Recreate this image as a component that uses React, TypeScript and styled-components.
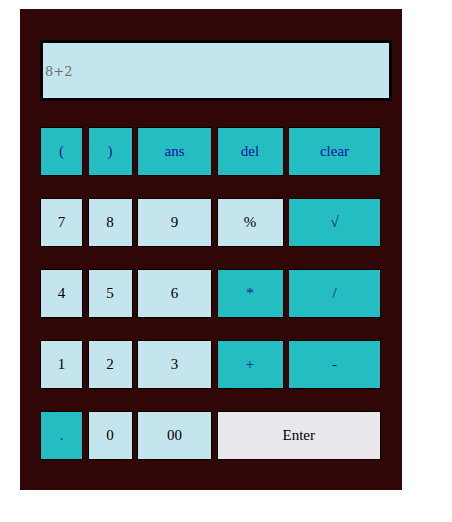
import styled, { createGlobalStyle } from "styled-components";

const GlobalStyle = createGlobalStyle`
  body {
    margin: 0;
    background: #ffffff;
  }
`;

type Kind = "op" | "num" | "enter";

const keys: { label: string; kind: Kind; span?: number }[] = [
  { label: "(", kind: "op" },
  { label: ")", kind: "op" },
  { label: "ans", kind: "op" },
  { label: "del", kind: "op" },
  { label: "clear", kind: "op" },
  { label: "7", kind: "num" },
  { label: "8", kind: "num" },
  { label: "9", kind: "num" },
  { label: "%", kind: "num" },
  { label: "√", kind: "op" },
  { label: "4", kind: "num" },
  { label: "5", kind: "num" },
  { label: "6", kind: "num" },
  { label: "*", kind: "op" },
  { label: "/", kind: "op" },
  { label: "1", kind: "num" },
  { label: "2", kind: "num" },
  { label: "3", kind: "num" },
  { label: "+", kind: "op" },
  { label: "-", kind: "op" },
  { label: ".", kind: "op" },
  { label: "0", kind: "num" },
  { label: "00", kind: "num" },
  { label: "Enter", kind: "enter", span: 2 },
];

const colors: Record<Kind, { bg: string; fg: string }> = {
  op: { bg: "#23bdc2", fg: "#12129a" },
  num: { bg: "#c5e5ee", fg: "#000000" },
  enter: { bg: "#e8e8ec", fg: "#000000" },
};

export default function App() {
  return (
    <>
      <GlobalStyle />
      <Calculator>
        <Display>8+2</Display>
        <Keypad>
          {keys.map((k) => (
            <Key key={k.label} $kind={k.kind} $span={k.span ?? 1}>
              {k.label}
            </Key>
          ))}
        </Keypad>
      </Calculator>
    </>
  );
}

const Calculator = styled.div`
  width: 382px;
  margin: 9px 0 0 20px;
  padding: 31px 10px 30px 20px;
  box-sizing: border-box;
  background-color: #300606;
`;

const Display = styled.div`
  height: 61px;
  width: 352px;
  box-sizing: border-box;
  border: 3px solid #000000;
  background-color: #c5e5ee;
  color: #6e6e6e;
  font-family: "DejaVu Serif", serif;
  font-size: 13px;
  display: flex;
  align-items: center;
  padding: 1px 0 0 2px;
  margin-bottom: 26px;
`;

const Keypad = styled.div`
  display: grid;
  grid-template-columns: 43px 45px 75px 67px 93px;
  grid-auto-rows: 49px;
  column-gap: 4.5px;
  row-gap: 22px;
`;

const Key = styled.button<{ $kind: Kind; $span: number }>`
  grid-column: span ${(p) => p.$span};
  border: 1px solid #000000;
  border-radius: 0;
  padding: 0;
  background-color: ${(p) => colors[p.$kind].bg};
  color: ${(p) => colors[p.$kind].fg};
  font-family: "Liberation Serif", serif;
  font-size: 15px;
  cursor: pointer;
`;
